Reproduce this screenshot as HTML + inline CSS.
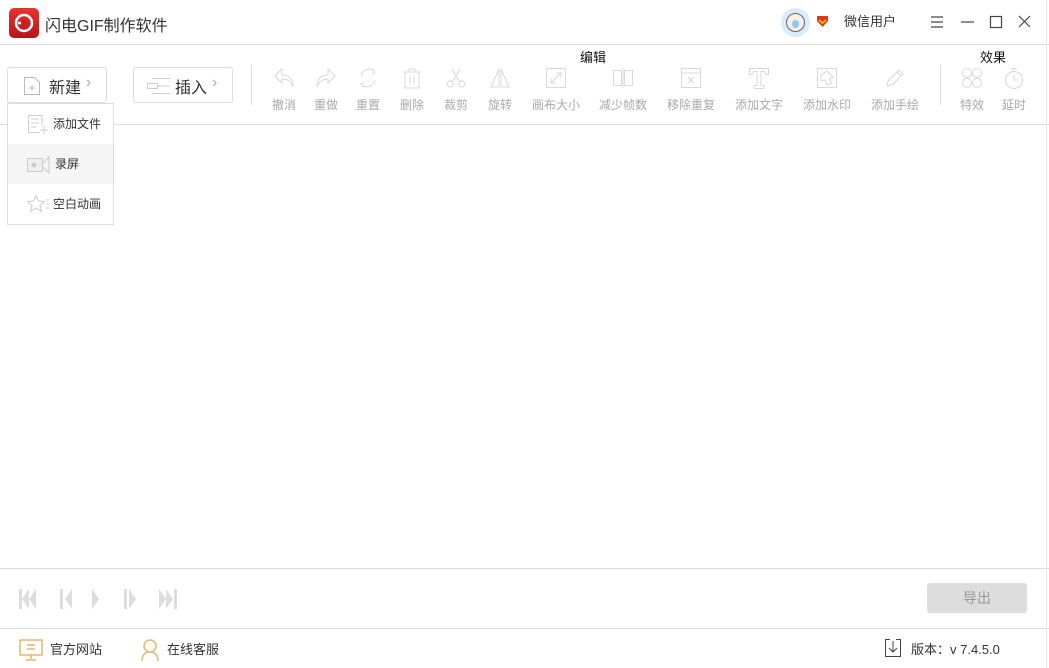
<!DOCTYPE html>
<html><head><meta charset="utf-8"><style>
*{margin:0;padding:0;box-sizing:border-box}
body{width:1049px;height:668px;background:#fff;position:relative;overflow:hidden;font-family:"Liberation Sans","Noto Sans CJK SC",sans-serif;color:#333}
.a{position:absolute}
.hl{position:absolute;left:0;width:1049px;height:1px;background:#dcdcdc}
.tb{position:absolute;top:66px;width:50px;margin-left:-25px;text-align:center}
.tb svg{display:block;margin:0 auto;width:24px;height:24px}
.tb span{display:block;font-size:12px;color:#aaa;margin-top:6px;white-space:nowrap}
.btn{position:absolute;top:67px;height:36px;width:100px;border:1px solid #ddd;border-radius:3px;font-size:16px;color:#333}
.mi{position:absolute;left:8px;width:105px;height:40px;font-size:12px;color:#333}
</style></head><body>
<div class="a" style="left:9px;top:8px;width:30px;height:30px;border-radius:5px;background:linear-gradient(#e8352f,#b8141a)">
<svg width="30" height="30" viewBox="0 0 30 30"><circle cx="15" cy="15" r="8" fill="none" stroke="#fff" stroke-width="2.5"/><path d="M9 15h8" stroke="#fff" stroke-width="2.5"/><circle cx="15" cy="15" r="3" fill="#c41a20"/></svg></div>
<div class="a" style="left:45px;top:12px;font-size:16px;color:#333">闪电GIF制作软件</div>
<div class="a" style="left:781px;top:8px;width:29px;height:29px;border-radius:50%;background:#d8ecfb"><div style="position:absolute;left:5px;top:5px;width:19px;height:19px;border-radius:50%;background:#f4f0e6;border:1px solid #666"></div><div style="position:absolute;left:11px;top:12px;width:7px;height:8px;border-radius:50%;background:#8cc8f0"></div></div>
<svg class="a" style="left:815px;top:14px" width="15" height="15" viewBox="0 0 15 15"><path d="M2 2h11v5l-5.5 6L2 7z" fill="#e03a10"/><path d="M4 6l3.5 3 3.5-3" stroke="#fc0" fill="none" stroke-width="1.5"/></svg>
<div class="a" style="left:844px;top:11px;font-size:13px;color:#333">微信用户</div>
<svg class="a" style="left:928px;top:14px" width="110" height="16" viewBox="0 0 110 16" stroke="#444" fill="none" stroke-width="1.2"><path d="M3 3h12M3 8h12M3 13h12"/><path d="M33 8h13"/><rect x="62.5" y="2.5" width="11" height="11"/><path d="M91 2l11 11M102 2L91 13"/></svg>
<div class="hl" style="top:44px"></div>
<div class="a" style="left:580px;top:47px;font-size:13px;color:#111">编辑</div>
<div class="a" style="left:980px;top:47px;font-size:13px;color:#111">效果</div>
<div class="btn" style="left:7px"><svg class="a" style="left:15px;top:8px" width="18" height="20" viewBox="0 0 18 20" fill="none" stroke="#bbb"><path d="M1.5 1.5h10l5 5v12h-15z"/><path d="M6 12h6M9 9v6"/></svg><span class="a" style="left:41px;top:6px">新建</span><span class="a" style="left:78px;top:6px;color:#aaa;font-size:16px">›</span></div>
<div class="btn" style="left:133px"><svg class="a" style="left:12px;top:9px" width="26" height="18" viewBox="0 0 26 18" fill="none" stroke="#ccc"><path d="M6 1.5h18M1.5 6.5h10v5h-10zM11 9h13M6 16.5h18"/></svg><span class="a" style="left:41px;top:6px">插入</span><span class="a" style="left:78px;top:6px;color:#aaa;font-size:16px">›</span></div>
<div class="a" style="left:251px;top:65px;width:1px;height:40px;background:#ddd"></div>
<div class="a" style="left:940px;top:65px;width:1px;height:40px;background:#ddd"></div>
<div class="tb" style="left:284px"><svg viewBox="0 0 24 24" fill="none" stroke="#d8d8d8"><path d="M10 3L3 10l7 7v-4c5 0 9 2 11 8 0-8-4-12-11-12V3z"/></svg><span>撤消</span></div>
<div class="tb" style="left:326px"><svg viewBox="0 0 24 24" fill="none" stroke="#d8d8d8"><path d="M14 3l7 7-7 7v-4c-5 0-9 2-11 8 0-8 4-12 11-12V3z"/></svg><span>重做</span></div>
<div class="tb" style="left:368px"><svg viewBox="0 0 24 24" fill="none" stroke="#d8d8d8"><path d="M5 10a8 8 0 0 1 14-4M19 14a8 8 0 0 1-14 4M16 3l3 3-3 2M8 21l-3-3 3-2"/></svg><span>重置</span></div>
<div class="tb" style="left:412px"><svg viewBox="0 0 24 24" fill="none" stroke="#d8d8d8"><path d="M3 6h18M9 6V3h6v3M5 6v16h14V6M10 10v8M14 10v8"/></svg><span>删除</span></div>
<div class="tb" style="left:456px"><svg viewBox="0 0 24 24" fill="none" stroke="#d8d8d8"><circle cx="6" cy="18" r="3"/><circle cx="18" cy="18" r="3"/><path d="M8 16L16 3M16 16L8 3"/></svg><span>裁剪</span></div>
<div class="tb" style="left:500px"><svg viewBox="0 0 24 24" fill="none" stroke="#d8d8d8"><path d="M11 3L3 21h8zM13 3l8 18h-8z"/></svg><span>旋转</span></div>
<div class="tb" style="left:556px"><svg viewBox="0 0 24 24" fill="none" stroke="#d8d8d8"><rect x="2.5" y="2.5" width="19" height="19"/><path d="M7 17l10-10M12 7h5v5M7 12v5h5"/></svg><span>画布大小</span></div>
<div class="tb" style="left:623px"><svg viewBox="0 0 24 24" fill="none" stroke="#d8d8d8"><rect x="2.5" y="4.5" width="8" height="15"/><rect x="13.5" y="4.5" width="8" height="15"/><path d="M12 2v20"/></svg><span>减少帧数</span></div>
<div class="tb" style="left:691px"><svg viewBox="0 0 24 24" fill="none" stroke="#d8d8d8"><rect x="2.5" y="2.5" width="19" height="19"/><path d="M2.5 7h19M9 11l6 6M15 11l-6 6"/></svg><span>移除重复</span></div>
<div class="tb" style="left:759px"><svg viewBox="0 0 24 24" fill="none" stroke="#d8d8d8"><path d="M2.5 2.5h19v6h-3l-1-3h-3.5v14h3v3h-10v-3h3v-14H6.5l-1 3h-3z"/></svg><span>添加文字</span></div>
<div class="tb" style="left:827px"><svg viewBox="0 0 24 24" fill="none" stroke="#d8d8d8"><rect x="2.5" y="2.5" width="19" height="19"/><path d="M6 9l6-4 6 6-4 2 3 4-5 2-2-5-4 1z"/></svg><span>添加水印</span></div>
<div class="tb" style="left:895px"><svg viewBox="0 0 24 24" fill="none" stroke="#d8d8d8"><path d="M4 20l1-5L16 4l4 4L9 19zM14 6l4 4"/></svg><span>添加手绘</span></div>
<div class="tb" style="left:972px"><svg viewBox="0 0 24 24" fill="none" stroke="#d8d8d8"><circle cx="7" cy="7" r="4.5"/><circle cx="17" cy="7" r="4.5"/><circle cx="7" cy="17" r="4.5"/><circle cx="17" cy="17" r="4.5"/></svg><span>特效</span></div>
<div class="tb" style="left:1014px"><svg viewBox="0 0 24 24" fill="none" stroke="#d8d8d8"><circle cx="12" cy="14" r="8.5"/><path d="M9 2.5h6M12 2.5v3M12 9v5h4"/></svg><span>延时</span></div>
<div class="hl" style="top:124px"></div>
<div class="a" style="left:7px;top:103px;width:107px;height:122px;border:1px solid #ddd;background:#fff"></div>
<div class="mi" style="top:104px"><svg class="a" style="left:19px;top:10px" width="22" height="20" viewBox="0 0 22 20" fill="none" stroke="#ccc"><path d="M15 12V1.5H1.5v17H13M4 5h8M4 9h8M4 13h5M17 12v8M13 16h8"/></svg><span class="a" style="left:45px;top:11px">添加文件</span></div>
<div class="mi" style="top:144px;background:#f5f5f5"><svg class="a" style="left:19px;top:11px" width="24" height="20" viewBox="0 0 24 20" fill="none" stroke="#ccc"><rect x="0.5" y="3.5" width="15" height="13" fill="#eee"/><circle cx="7" cy="10" r="2.5" fill="#ccc" stroke="none"/><path d="M16 8l6-6v16l-6-6"/></svg><span class="a" style="left:47px;top:11px">录屏</span></div>
<div class="mi" style="top:184px"><svg class="a" style="left:19px;top:10px" width="24" height="20" viewBox="0 0 24 20" fill="none" stroke="#ccc"><path d="M9 1.5l2.5 5.5 6 .5-4.5 4 1.5 6-5.5-3.5-5.5 3.5 1.5-6-4.5-4 6-.5z"/><path d="M19 6h3M19 10h3M19 14h3"/></svg><span class="a" style="left:45px;top:11px">空白动画</span></div>
<div class="hl" style="top:568px"></div>
<svg class="a" style="left:18px;top:588px" width="165" height="22" viewBox="0 0 165 22" fill="#ddd"><rect x="1" y="1" width="3" height="20"/><path d="M4 11l7-10v20zM11 11l7-10v20z"/><rect x="42" y="1" width="3" height="20"/><path d="M47 11l7-10v20z"/><path d="M74 1l7 10-7 10z"/><rect x="106" y="1" width="3" height="20"/><path d="M111 1l7 10-7 10z"/><path d="M141 1l7 10-7 10zM148 1l7 10-7 10z"/><rect x="156" y="1" width="3" height="20"/></svg>
<div class="a" style="left:927px;top:583px;width:100px;height:30px;background:#ddd;border-radius:3px;text-align:center;line-height:30px;font-size:14px;color:#999">导出</div>
<div class="hl" style="top:628px"></div>
<svg class="a" style="left:19px;top:639px" width="24" height="22" viewBox="0 0 24 22" fill="none" stroke="#e8b470" stroke-width="1.5"><rect x="1" y="1" width="22" height="15"/><path d="M8 6h8M8 10h8M12 16v4M7 21h10"/></svg>
<div class="a" style="left:50px;top:639px;font-size:13px;color:#333">官方网站</div>
<svg class="a" style="left:140px;top:638px" width="20" height="24" viewBox="0 0 20 24" fill="none" stroke="#e8b470" stroke-width="1.5"><circle cx="10" cy="8" r="6"/><path d="M2 23c0-6 3-9 8-9s8 3 8 9"/></svg>
<div class="a" style="left:167px;top:639px;font-size:13px;color:#333">在线客服</div>
<svg class="a" style="left:884px;top:638px" width="18" height="20" viewBox="0 0 18 20" fill="none" stroke="#444"><path d="M6 1.5H1.5v17h15v-17H12M9 3v11M5 10l4 4 4-4"/></svg>
<div class="a" style="left:911px;top:639px;font-size:13px;color:#333">版本：v 7.4.5.0</div>
<div class="a" style="left:1046px;top:0;width:1px;height:668px;background:#e4e4e4"></div>
</body></html>
